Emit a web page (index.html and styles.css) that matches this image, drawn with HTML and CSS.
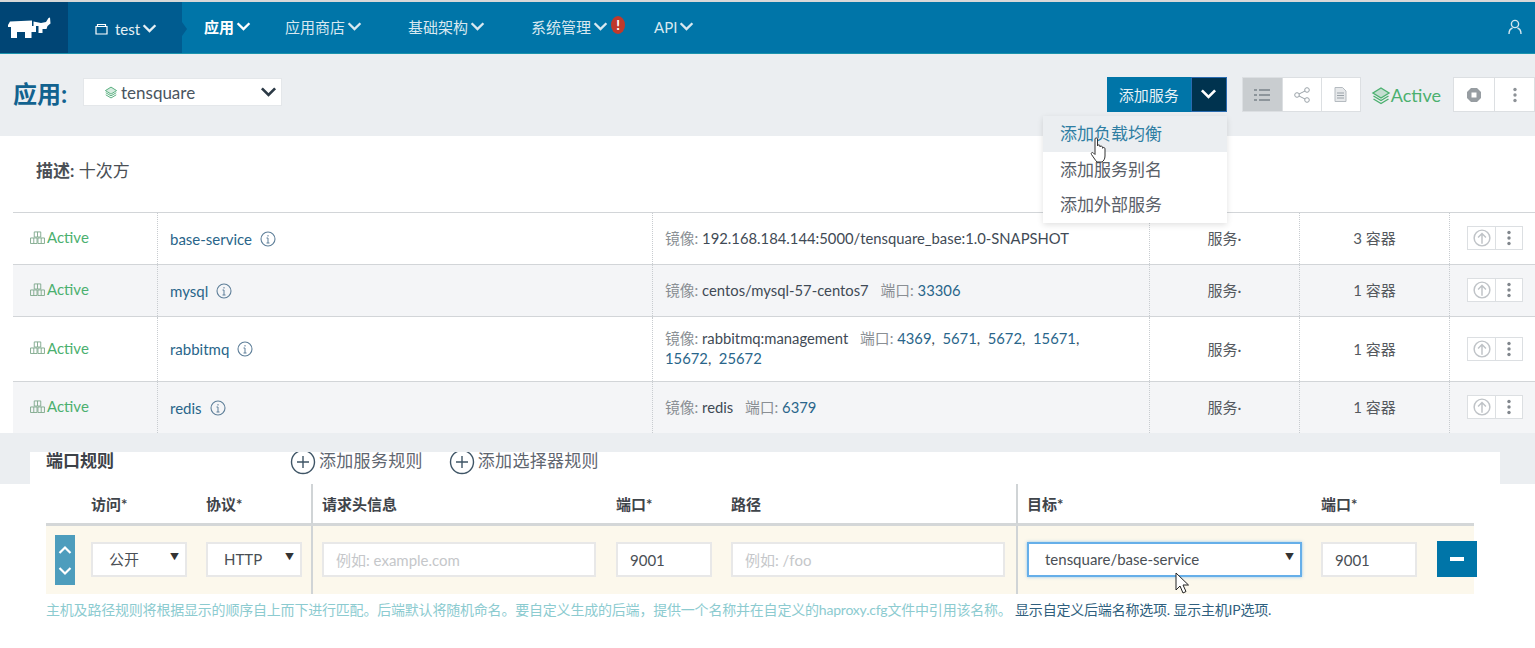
FILE: index.html
```html
<!DOCTYPE html>
<html lang="zh-CN">
<head>
    <meta charset="UTF-8">
    <title>应用 - tensquare</title>
    <link rel="stylesheet" href="styles.css">
</head>
<body>
<svg class="defs" width="0" height="0">
    <symbol id="chev" viewBox="0 0 14 10"><path d="M1.500 2 7 7.500 12.500 2" fill="none" stroke="currentColor" stroke-width="2.200"/></symbol>
    <symbol id="layers" viewBox="0 0 20 20"><path d="M10 3 18 8 10 13 2 8Z" fill="currentColor" fill-opacity=".25" stroke="currentColor" stroke-width="1.400"/><path d="M2.500 11 10 15.500 17.500 11M2.500 14 10 18.500 17.500 14" fill="none" stroke="currentColor" stroke-width="1.400"/></symbol>
    <symbol id="boxes" viewBox="0 0 16 14"><path d="M4.500 1h7v5.500h-7ZM.5 7.500h7v6h-7ZM8.500 7.500h7v6h-7ZM8 1v5.500M4 7.500v6M12 7.500v6" fill="none" stroke="#7fa98c" stroke-width="1"/></symbol>
    <symbol id="info" viewBox="0 0 16 16"><circle cx="8" cy="8" r="7" fill="none" stroke="currentColor" stroke-width="1.100"/><path d="M8 7v5M8 4v1.500M6.500 7H8M6.500 12h3" fill="none" stroke="currentColor" stroke-width="1"/></symbol>
    <symbol id="up" viewBox="0 0 16 16"><circle cx="8" cy="8" r="7" fill="none" stroke="currentColor" stroke-width="1.300"/><path d="M8 13V4M4.500 7.500 8 4l3.500 3.500" fill="none" stroke="currentColor" stroke-width="1.300"/></symbol>
    <symbol id="dots" viewBox="0 0 4 16"><circle cx="2" cy="2.500" r="1.700" fill="currentColor"/><circle cx="2" cy="8" r="1.700" fill="currentColor"/><circle cx="2" cy="13.500" r="1.700" fill="currentColor"/></symbol>
    <symbol id="plus" viewBox="0 0 26 26"><circle cx="13" cy="13" r="11.500" fill="none" stroke="currentColor" stroke-width="1.400"/><path d="M13 7v12M7 13h12" fill="none" stroke="currentColor" stroke-width="1.400"/></symbol>
</svg>

<header class="navbar">
    <a class="logo">
        <svg width="44" height="22" viewBox="0 0 44 22"><path d="M0 8 2 4.500 24 3.500V9h4v6h-4.500v6H17v-6H9v6H3V10H0Z" fill="#fff"/><path d="M25.500 4.500 33 6l5-1 2.500-4 1.500-.5.500 6-3 2.500-1 3h-4v4h-4v-7h-5Z" fill="#fff"/></svg>
    </a>
    <a class="env">
        <svg class="env-icon" width="13" height="12" viewBox="0 0 13 12"><path d="M1 3.500h11v7.500H1ZM2.500 3.500V1.500h8v2" fill="none" stroke="#fff" stroke-width="1.200"/></svg>
        test<svg class="chev" width="15" height="11"><use href="#chev"/></svg>
    </a>
    <nav class="menu">
        <a class="menu-item current">应用<svg class="chev" width="15" height="11"><use href="#chev"/></svg></a>
        <a class="menu-item">应用商店<svg class="chev" width="15" height="11"><use href="#chev"/></svg></a>
        <a class="menu-item">基础架构<svg class="chev" width="15" height="11"><use href="#chev"/></svg></a>
        <a class="menu-item">系统管理<svg class="chev" width="15" height="11"><use href="#chev"/></svg><span class="alert">!</span></a>
        <a class="menu-item">API<svg class="chev" width="15" height="11"><use href="#chev"/></svg></a>
    </nav>
    <svg class="user" width="14" height="16" viewBox="0 0 14 16"><circle cx="7" cy="5" r="3.600" fill="none" stroke="#d5e6ef" stroke-width="1.400"/><path d="M1 15c0-3.500 2-5.500 3.500-6M13 15c0-3.500-2-5.500-3.500-6" fill="none" stroke="#d5e6ef" stroke-width="1.400"/></svg>
</header>

<section class="toolbar">
    <h1 class="page-title">应用:</h1>
    <div class="stack-select">
        <svg class="layer-sm" width="14" height="14"><use href="#layers"/></svg>
        <span class="stack-name">tensquare</span>
        <svg class="stack-chev" width="17" height="12"><use href="#chev"/></svg>
    </div>
    <div class="toolbar-right">
        <div class="add-group">
            <button class="add-btn">添加服务</button>
            <button class="add-caret"><svg width="17" height="12"><use href="#chev"/></svg></button>
        </div>
        <div class="btn-group views">
            <button class="tool on"><svg width="16" height="14" viewBox="0 0 16 14"><path d="M0 2h3M5 2h11M0 7h3M5 7h11M0 12h3M5 12h11" stroke="#8d959b" stroke-width="2"/></svg></button>
            <button class="tool"><svg width="16" height="16" viewBox="0 0 16 16"><g fill="none" stroke="#9aa2a8"><circle cx="3" cy="8" r="2.300"/><circle cx="13" cy="3" r="2.300"/><circle cx="13" cy="13" r="2.300"/><path d="M5 7 11 4M5 9l6 3"/></g></svg></button>
            <button class="tool"><svg width="13" height="15" viewBox="0 0 13 15"><path d="M1 .5h7.500L12 4v10.500H1Z" fill="#e6e8ea" stroke="#b5bbc0"/><path d="M3 6h7M3 8.500h7M3 11h7" stroke="#9aa2a8"/></svg></button>
        </div>
        <div class="state">
            <svg width="20" height="20"><use href="#layers"/></svg>Active
        </div>
        <div class="btn-group actions">
            <button class="tool wide"><svg width="16" height="16" viewBox="0 0 16 16"><path d="M5 1h6l4 4v6l-4 4H5l-4-4V5Z" fill="#979da2"/><rect x="5.500" y="5.500" width="5" height="5" fill="#fff"/></svg></button>
            <button class="tool wide dots-btn"><svg width="4" height="16"><use href="#dots"/></svg></button>
        </div>
    </div>
    <ul class="dropdown">
        <li class="hover">添加负载均衡</li>
        <li>添加服务别名</li>
        <li>添加外部服务</li>
    </ul>
</section>

<section class="card">
    <p class="desc"><b>描述:</b> 十次方</p>
    <div class="svc-row">
        <div class="cell status"><svg width="15" height="13"><use href="#boxes"/></svg>Active</div>
        <div class="cell name"><a>base-service</a><svg class="info" width="16" height="16"><use href="#info"/></svg></div>
        <div class="cell image"><div><span class="lbl">镜像:</span> 192.168.184.144:5000/tensquare_base:1.0-SNAPSHOT</div></div>
        <div class="cell center">服务·</div>
        <div class="cell center">3 容器</div>
        <div class="cell ops"><span class="op-group"><span class="op"><svg width="18" height="18"><use href="#up"/></svg></span><span class="op"><svg width="4" height="16"><use href="#dots"/></svg></span></span></div>
    </div>
    <div class="svc-row alt">
        <div class="cell status"><svg width="15" height="13"><use href="#boxes"/></svg>Active</div>
        <div class="cell name"><a>mysql</a><svg class="info" width="16" height="16"><use href="#info"/></svg></div>
        <div class="cell image"><div><span class="lbl">镜像:</span> centos/mysql-57-centos7 <span class="lbl gap">端口:</span> <a>33306</a></div></div>
        <div class="cell center">服务·</div>
        <div class="cell center">1 容器</div>
        <div class="cell ops"><span class="op-group"><span class="op"><svg width="18" height="18"><use href="#up"/></svg></span><span class="op"><svg width="4" height="16"><use href="#dots"/></svg></span></span></div>
    </div>
    <div class="svc-row tall">
        <div class="cell status"><svg width="15" height="13"><use href="#boxes"/></svg>Active</div>
        <div class="cell name"><a>rabbitmq</a><svg class="info" width="16" height="16"><use href="#info"/></svg></div>
        <div class="cell image"><div><span class="lbl">镜像:</span> rabbitmq:management <span class="lbl gap">端口:</span> <a>4369</a>,&nbsp; <a>5671</a>,&nbsp; <a>5672</a>,&nbsp; <a>15671</a>,<br><a>15672</a>,&nbsp; <a>25672</a></div></div>
        <div class="cell center">服务·</div>
        <div class="cell center">1 容器</div>
        <div class="cell ops"><span class="op-group"><span class="op"><svg width="18" height="18"><use href="#up"/></svg></span><span class="op"><svg width="4" height="16"><use href="#dots"/></svg></span></span></div>
    </div>
    <div class="svc-row alt">
        <div class="cell status"><svg width="15" height="13"><use href="#boxes"/></svg>Active</div>
        <div class="cell name"><a>redis</a><svg class="info" width="16" height="16"><use href="#info"/></svg></div>
        <div class="cell image"><div><span class="lbl">镜像:</span> redis <span class="lbl gap">端口:</span> <a>6379</a></div></div>
        <div class="cell center">服务·</div>
        <div class="cell center">1 容器</div>
        <div class="cell ops"><span class="op-group"><span class="op"><svg width="18" height="18"><use href="#up"/></svg></span><span class="op"><svg width="4" height="16"><use href="#dots"/></svg></span></span></div>
    </div>
</section>

<div class="rules-top">
    <div class="rules-head">
        <b class="rules-title">端口规则</b>
        <a class="rules-add"><svg width="26" height="23" viewBox="0 3 26 23"><use href="#plus" width="26" height="26"/></svg>添加服务规则</a>
        <a class="rules-add"><svg width="26" height="23" viewBox="0 3 26 23"><use href="#plus" width="26" height="26"/></svg>添加选择器规则</a>
    </div>
</div>

<section class="rules">
    <div class="rule-grid rule-labels">
        <div></div>
        <div>访问*</div>
        <div>协议*</div>
        <div class="split">请求头信息</div>
        <div>端口*</div>
        <div>路径</div>
        <div class="split">目标*</div>
        <div>端口*</div>
    </div>
    <div class="rule-grid rule-row">
        <div class="handle-cell">
            <div class="handle">
                <svg class="flip" width="14" height="10"><use href="#chev"/></svg>
                <svg width="14" height="10"><use href="#chev"/></svg>
            </div>
        </div>
        <div><div class="field sel access">公开<i>▼</i></div></div>
        <div><div class="field sel proto">HTTP<i>▼</i></div></div>
        <div class="split"><input class="field host" placeholder="例如: example.com"></div>
        <div><input class="field port" value="9001"></div>
        <div><input class="field host path" placeholder="例如: /foo"></div>
        <div class="split"><div class="field sel target">tensquare/base-service<i>▼</i></div></div>
        <div class="last">
            <input class="field port" value="9001">
            <button class="remove"><span></span></button>
        </div>
    </div>
    <p class="help">主机及路径规则将根据显示的顺序自上而下进行匹配。后端默认将随机命名。要自定义生成的后端，提供一个名称并在自定义的haproxy.cfg文件中引用该名称。 <a>显示自定义后端名称选项.</a> <a>显示主机IP选项.</a></p>
</section>

<!-- 鼠标指针 -->
<svg class="cursor-hand" width="18" height="26" viewBox="0 0 18 26"><path d="M5 2c0-1.500 2.500-1.500 2.500 0v7c0-1.500 2.500-1.500 2.500 0v1c0-1.200 2.500-1.200 2.500.2v1c0-1 2.500-1 2.500.5V19c0 3-1.500 5-3 6H7c-1.500-1.500-3-4-5.500-7.500-1-1.500.8-2.800 2-1.500L5 17.500Z" fill="#fff" stroke="#333" stroke-width="1"/></svg>
<svg class="cursor-arrow" width="16" height="24" viewBox="0 0 16 24"><path d="M1 1v17l4-4 3 7 3-1.500-3-6.500h5.500Z" fill="#fff" stroke="#222" stroke-width="1"/></svg>
</body>
</html>
```

FILE: styles.css
```css
*{
    margin: 0;
    padding: 0;
    box-sizing: border-box;
    list-style: none;
}
html,body{
    height: 648px;
    overflow: hidden;
}
body{
    position: relative;
    background-color: #fff;
    font-family: "Lato","Noto Sans CJK SC",sans-serif;
    font-size: 14px;
    color: #4a4f55;
}
button{
    font-family: inherit;
    border: none;
}
.defs{
    position: absolute;
}

/* 顶部导航 */
.navbar{
    display: flex;
    align-items: stretch;
    height: 54px;
    border-top: 2px solid #d8d8d8;
    border-bottom: 1px solid #1b93ad;
    background-color: #0075a8;
    color: #d8e8f0;
    font-size: 15px;
}
.logo{
    display: flex;
    align-items: center;
    width: 68px;
    padding-left: 8px;
    background-color: #004575;
}
.env{
    position: relative;
    display: flex;
    align-items: center;
    width: 114px;
    padding: 2px 0 0 27px;
    background-color: #005c90;
    color: #e6f0f5;
}
.env:after{
    content: '';
    position: absolute;
    right: -5px;
    top: 20px;
    border-left: 5px solid #005c90;
    border-top: 7px solid transparent;
    border-bottom: 7px solid transparent;
}
.env-icon{
    margin-right: 7px;
}
.chev{
    margin-left: 2px;
}
.menu{
    display: flex;
    align-items: center;
    padding-left: 22px;
    padding-bottom: 2px;
}
.menu-item{
    position: relative;
    display: flex;
    align-items: center;
    margin-right: 46px;
    white-space: nowrap;
}
.menu-item.current{
    color: #fff;
    font-weight: 700;
    margin-right: 34px;
}
.alert{
    position: absolute;
    right: -17px;
    top: 0;
    width: 14px;
    height: 18px;
    border-radius: 50%;
    background-color: #c0392b;
    color: #fff;
    font-size: 13px;
    font-weight: 900;
    line-height: 18px;
    text-align: center;
}
.user{
    margin: 17px 13px 0 auto;
}

/* 工具条 */
.toolbar{
    position: relative;
    display: flex;
    align-items: flex-start;
    height: 82px;
    padding: 23px 0 0 13px;
    background-color: #ebeef1;
}
.page-title{
    width: 70px;
    font-size: 24px;
    line-height: 34px;
    color: #12628f;
}
.stack-select{
    display: flex;
    align-items: center;
    width: 199px;
    height: 28px;
    margin-top: 1px;
    padding: 0 4px 0 20px;
    background-color: #fff;
    border: 1px solid #e4e7ea;
    font-size: 17px;
    color: #4a5560;
}
.layer-sm{
    margin-right: 3px;
    color: #57ae7e;
}
.stack-name{
    flex: 1;
}
.stack-chev{
    margin-right: 0;
    color: #2c3a46;
}
.toolbar-right{
    display: flex;
    align-items: flex-start;
    margin-left: auto;
}
.add-group{
    display: flex;
    height: 35px;
    margin-right: 15px;
}
.add-btn{
    width: 84px;
    background-color: #0075a8;
    color: #e8f2f7;
    font-size: 15px;
}
.add-caret{
    width: 36px;
    background-color: #00334f;
    border: 1px solid #2a6bb0;
    color: #fff;
}
.btn-group{
    display: flex;
    height: 35px;
    border: 1px solid #dcdfe2;
    background-color: #fff;
}
.tool{
    display: flex;
    align-items: center;
    justify-content: center;
    width: 39px;
    background-color: #fff;
    border-left: 1px solid #dcdfe2;
}
.tool:first-child{
    border-left: none;
}
.tool.on{
    background-color: #c9cdd0;
}
.tool.wide{
    width: 40px;
}
.dots-btn{
    color: #8d9297;
}
.state{
    display: flex;
    align-items: center;
    height: 35px;
    margin: 0 12px 0 10px;
    color: #4bb06f;
    font-size: 18px;
}
.dropdown{
    position: absolute;
    left: 1043px;
    top: 62px;
    z-index: 5;
    width: 184px;
    background-color: #fff;
    box-shadow: 0 2px 6px rgba(0,0,0,.12);
    font-size: 17px;
    color: #5a6068;
}
.dropdown li{
    height: 35.500px;
    padding-left: 17px;
    line-height: 36px;
}
.dropdown .hover{
    background-color: #ebeef1;
    color: #2f7ea3;
}

/* 描述和服务列表 */
.card{
    margin-left: 13px;
    background-color: #fff;
    height: 297px;
    border-bottom: 1px solid #d2d5d8;
}
.desc{
    height: 76px;
    padding: 23px 0 0 23px;
    font-size: 17px;
    line-height: 24px;
    color: #4a4f55;
}
.svc-row{
    display: grid;
    grid-template-columns: 144px 495px 497px 150px 150px 1fr;
    height: 52px;
    border-top: 1px solid #d2d5d8;
    font-size: 15px;
}
.svc-row.alt{
    background-color: #f4f5f7;
}
.svc-row.tall{
    height: 65px;
}
.cell{
    display: flex;
    align-items: center;
    border-left: 1px dotted #c8ccd0;
    padding-left: 12px;
}
.cell a{
    color: #29658a;
}
.status{
    border-left: none;
    padding: 0 0 3px 17px;
    color: #4bb06f;
    font-size: 15px;
    gap: 2px;
}
.name a{
    margin-right: 8px;
}
.info{
    color: #5e7f99;
}
.image{
    padding-bottom: 2px;
    color: #3f4a55;
    line-height: 20px;
    font-size: 14.800px;
}
.lbl{
    color: #8a8f94;
}
.gap{
    margin-left: 8px;
}
.center{
    justify-content: center;
    padding: 0 0 2px;
    color: #55595e;
}
.ops{
    padding: 0 0 1px 17px;
}
.op-group{
    display: flex;
    height: 24px;
    border: 1px solid #dcdfe2;
    background-color: #fff;
    color: #bfc3c7;
}
.op{
    display: flex;
    align-items: center;
    justify-content: center;
    width: 27px;
}
.op + .op{
    border-left: 1px solid #dcdfe2;
    color: #80868c;
}

/* 端口规则 */
.rules-top{
    padding: 19px 35px 0 30px;
    background-color: #ebeef1;
}
.rules-head{
    display: flex;
    height: 32px;
    background-color: #fff;
    font-size: 17px;
}
.rules-title{
    width: 260px;
    padding-left: 16px;
    line-height: 17px;
    color: #3d4248;
}
.rules-add{
    display: flex;
    align-items: flex-start;
    margin-right: 26px;
    line-height: 18px;
    letter-spacing: .3px;
    color: #5f6670;
    white-space: nowrap;
}
.rules-add svg{
    margin-right: 3px;
    color: #3f5566;
}
.rules{
    padding: 0 61px 0 46px;
}
.rule-grid{
    display: grid;
    grid-template-columns: 45px 115px 105px 305px 115px 285px 305px 1fr;
}
.rule-labels{
    height: 42px;
    border-bottom: 3px solid #d4d7d8;
    line-height: 40px;
    font-size: 15px;
    font-weight: 700;
    color: #3f444a;
}
.split{
    border-left: 2px solid #d0d4d6;
    padding-left: 9px;
}
.rule-row{
    height: 68px;
    background-color: #fcf8ec;
}
.rule-row > div{
    padding-top: 16px;
}
.rule-row > .handle-cell{
    padding: 9px 0 0 9px;
}
.handle{
    display: flex;
    flex-direction: column;
    align-items: center;
    justify-content: space-around;
    width: 20px;
    height: 50px;
    padding: 4px 0;
    background-color: #4d9dbd;
    color: #fff;
}
.flip{
    transform: rotate(180deg);
}
.field{
    display: block;
    height: 35px;
    border: 2px solid #e8e8e8;
    background-color: #fff;
    font-family: inherit;
    font-size: 15px;
    line-height: 31px;
    color: #4a4f55;
    outline: none;
}
input.field{
    padding-left: 12px;
}
input.field::placeholder{
    color: #c5c7ca;
}
.sel{
    position: relative;
    padding-left: 16px;
}
.sel i{
    position: absolute;
    right: 6px;
    top: -3px;
    font-style: normal;
    font-size: 9px;
    color: #333;
}
.access,.proto{
    width: 96px;
}
.host{
    width: 274px;
}
.port{
    width: 96px;
}
.target{
    width: 275px;
    border-color: #66afe9;
    box-shadow: 0 0 3px rgba(102,175,233,.7);
}
.last{
    position: relative;
}
.remove{
    position: absolute;
    left: 116px;
    top: 15px;
    display: flex;
    align-items: center;
    justify-content: center;
    width: 40px;
    height: 36px;
    background-color: #0075a8;
}
.remove span{
    width: 14px;
    height: 4px;
    background-color: #fff;
}
.help{
    margin-top: 7px;
    font-size: 14px;
    letter-spacing: -.2px;
    line-height: 18px;
    color: #8ccbd0;
    white-space: nowrap;
}
.help a{
    color: #2f5f7e;
}

/* 鼠标指针盖在页面上 */
.cursor-hand{
    position: absolute;
    left: 1090px;
    top: 137px;
    z-index: 6;
}
.cursor-arrow{
    position: absolute;
    left: 1175px;
    top: 572px;
    z-index: 6;
}
```
